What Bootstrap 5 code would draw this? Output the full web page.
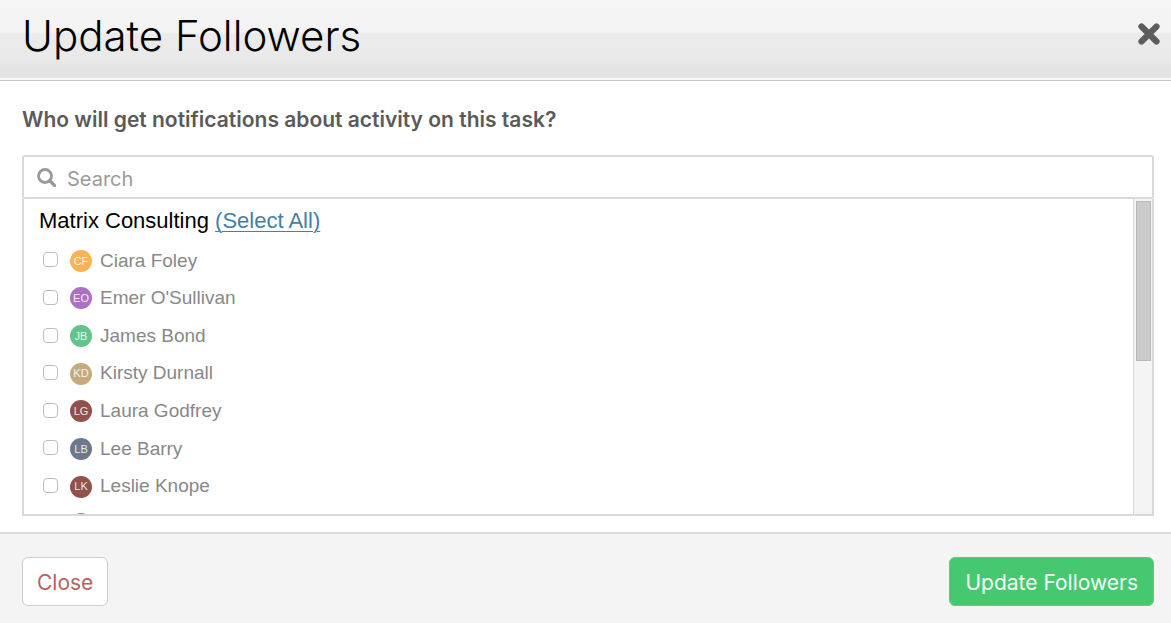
<!DOCTYPE html>
<html lang="en">
<head>
<meta charset="utf-8">
<meta name="viewport" content="width=device-width, initial-scale=1">
<title>Update Followers</title>
<link rel="stylesheet" href="https://cdn.jsdelivr.net/npm/bootstrap@5.3.0/dist/css/bootstrap.min.css">
<style>
  body { font-family: "Liberation Sans", Arial, sans-serif; background: #fff; }
  .dialog-head {
    height: 81px;
    padding: 0 10px 12px 22px;
    background: linear-gradient(#f5f5f5 0, #f3f3f3 32px, #ebebeb 34px, #e9e9e9 62px, #e3e3e3 70px, #e3e3e3 78px, #f8f8f8 78px);
    border-bottom: 1px solid #c8c8c8;
  }
  .dialog-title { font: 300 42px/48px Inter, sans-serif; color: #000; }
  .dismiss { color: #5d5d5d; line-height: 0; }
  .dialog-main { padding: 23px 17px 16px 22px; }
  .question { font: 600 21px/32px Inter, sans-serif; color: #5a5a5a; margin-bottom: 19px; }
  .search-box { height: 44px; border: 2px solid #d9d9d9; border-radius: 3px; padding-left: 13px; gap: 11px; }
  .search-box input { font: 400 20px/28px Inter, sans-serif; color: #555; outline: 0; }
  .search-box input::placeholder { color: #9b9b9b; opacity: 1; }
  .people { height: 317px; border: 2px solid #d9d9d9; border-top: 0; }
  .people-scroll { padding: 7px 15px 0; }
  .group-name { font-size: 22px; line-height: 30px; color: #000; }
  .group-name a { color: #4380a4; text-underline-offset: 3px; text-decoration-thickness: 1px; }
  .person-list { height: 301px; margin-top: 6px; grid-auto-rows: 1fr; }
  .person-list label { font-size: 19px; color: #888; gap: 8px; }
  .person-list input { width: 15px; height: 15px; margin: 0 4px 2px; border: 1px solid #bebebe; border-radius: 4px; appearance: none; background: #fff; }
  .person-list input:checked { background: #4380a4; }
  .avatar { width: 22px; height: 22px; font-size: 11px; color: #ffffffe0; }
  .orange { background: #f8b357; }
  .purple { background: #ab71c2; }
  .green { background: #62c48a; }
  .sand { background: #c6aa7b; }
  .brick { background: #90524a; }
  .slate { background: #6b7a89; }
  .track { width: 19px; border-left: 1px solid #d9d9d9; background: #f4f4f4; padding: 2px 1px 0 2px; }
  .thumb { height: 160px; background: #cbcbcb; border: 1px solid #b9b9b9; }
  .dialog-foot { border-top: 2px solid #dbdbdb; background: #f4f4f4; padding: 23px 17px 18px 22px; }
  .dialog-foot .btn { height: 49px; padding: 2px 15px 0; font: 400 21px/28px Inter, sans-serif; border-radius: 6px; }
  .dialog-foot .btn-close-dialog { padding: 2px 14px 0; background: #fff; border: 1px solid #cecece; color: #b9605f; }
  .dialog-foot .btn-save { background: #46c870; border: 1px solid #5ace80; color: #f5fff8; }
</style>
</head>
<body class="min-vh-100 d-flex flex-column">
<header class="dialog-head d-flex align-items-center justify-content-between">
  <h1 class="dialog-title mt-1 mb-0">Update Followers</h1>
  <button type="button" class="dismiss btn p-0 border-0" aria-label="Close dialog">
    <svg width="24" height="24" viewBox="0 0 24 24" aria-hidden="true"><path d="M4.500 4.500 19.500 19.500M19.500 4.500 4.500 19.500" stroke="currentColor" stroke-width="6.200" stroke-linecap="round"/></svg>
  </button>
</header>
<main class="dialog-main">
  <h2 class="question">Who will get notifications about activity on this task?</h2>
  <div class="search-box d-flex align-items-center">
    <svg width="19" height="19" viewBox="0 0 19 19" fill="none" stroke="#999" aria-hidden="true"><circle cx="8" cy="8" r="6.500" stroke-width="2.800"/><path d="m13 13 4.500 4.500" stroke-width="3.200" stroke-linecap="round"/></svg>
    <input type="text" class="border-0 px-0 pb-0 pt-1 flex-fill bg-transparent" placeholder="Search" aria-label="Search">
  </div>
  <div class="people d-flex">
    <div class="people-scroll flex-fill overflow-hidden">
      <div class="group-name">Matrix Consulting <a href="#all">(Select All)</a></div>
      <div class="person-list d-grid">
        <label class="d-flex align-items-center"><input type="checkbox"><span class="avatar orange rounded-circle d-flex align-items-center justify-content-center">CF</span>Ciara Foley</label>
        <label class="d-flex align-items-center"><input type="checkbox"><span class="avatar purple rounded-circle d-flex align-items-center justify-content-center">EO</span>Emer O'Sullivan</label>
        <label class="d-flex align-items-center"><input type="checkbox"><span class="avatar green rounded-circle d-flex align-items-center justify-content-center">JB</span>James Bond</label>
        <label class="d-flex align-items-center"><input type="checkbox"><span class="avatar sand rounded-circle d-flex align-items-center justify-content-center">KD</span>Kirsty Durnall</label>
        <label class="d-flex align-items-center"><input type="checkbox"><span class="avatar brick rounded-circle d-flex align-items-center justify-content-center">LG</span>Laura Godfrey</label>
        <label class="d-flex align-items-center"><input type="checkbox"><span class="avatar slate rounded-circle d-flex align-items-center justify-content-center">LB</span>Lee Barry</label>
        <label class="d-flex align-items-center"><input type="checkbox"><span class="avatar brick rounded-circle d-flex align-items-center justify-content-center">LK</span>Leslie Knope</label>
        <label class="d-flex align-items-center"><input type="checkbox" aria-label="Next person"><span class="avatar purple rounded-circle"></span></label>
      </div>
    </div>
    <div class="track flex-shrink-0" aria-hidden="true"><div class="thumb"></div></div>
  </div>
</main>
<footer class="dialog-foot d-flex justify-content-between flex-fill align-items-start">
  <button type="button" class="btn btn-close-dialog">Close</button>
  <button type="submit" class="btn btn-save">Update Followers</button>
</footer>
<script src="https://cdn.jsdelivr.net/npm/bootstrap@5.3.0/dist/js/bootstrap.bundle.min.js"></script>
</body>
</html>
